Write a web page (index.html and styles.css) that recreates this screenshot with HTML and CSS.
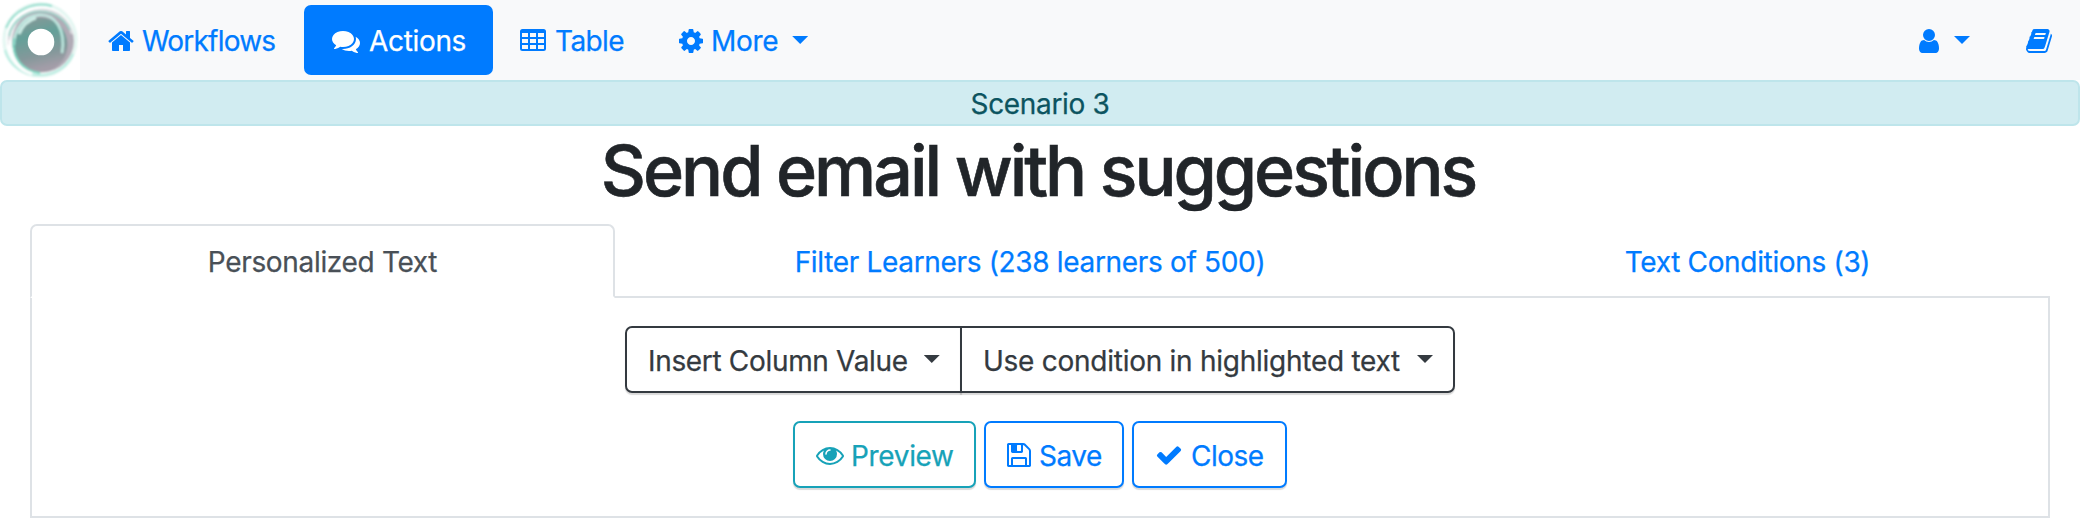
FILE: index.html
```
<!DOCTYPE html>
<html lang="en">
<head>
<meta charset="utf-8">
<title>Send email with suggestions</title>
<link rel="stylesheet" href="styles.css">
</head>
<body>
<nav class="navbar">
  <a class="brand" href="#">
    <svg class="logo" viewBox="0 0 80 80">
      <defs>
        <linearGradient id="ring" x1="0" y1="0" x2="0.25" y2="1">
          <stop offset="0" stop-color="#8d9698"/>
          <stop offset="0.4" stop-color="#64a099"/>
          <stop offset="0.75" stop-color="#83989a"/>
          <stop offset="1" stop-color="#a39da8"/>
        </linearGradient>
        <filter id="soft"><feGaussianBlur stdDeviation="0.9"/></filter>
      </defs>
      <rect width="80" height="80" fill="#fff"/>
      <g fill="none" filter="url(#soft)">
        <circle cx="40" cy="40" r="36" stroke="#e2f6f1" stroke-width="3"/>
        <path d="M6 28C13 10 34 1 52 6" stroke="#8fdcca" stroke-width="2"/>
        <path d="M5 50C9 66 24 76 42 75C57 74 68 66 73 54" stroke="#b4ebdf" stroke-width="2"/>
        <circle cx="43" cy="41" r="31" fill="#b0abb6"/>
        <circle cx="40" cy="45" r="27.5" fill="url(#ring)"/>
        <path d="M9 45C7 26 23 11 42 10C57 10 68 20 72 34" stroke="#d9dade" stroke-width="2.5"/>
        <path d="M9 36C12 19 30 9 46 12C58 14 66 22 70 30" stroke="#8fd4c6" stroke-width="1.5"/>
        <path d="M14 45C14 30 24 16 39 15C55 14 66 29 62 53" stroke="#c3eee5" stroke-width="2.3"/>
        <path d="M19 34C23 24 29 20 36 18" stroke="#d3f3ec" stroke-width="2.6"/>
        <path d="M14 38C11 57 22 71 40 73" stroke="#7ddbc5" stroke-width="2"/>
        <path d="M10 40C8 58 18 70 32 74" stroke="#fff" stroke-width="2.5"/>
      </g>
      <circle cx="41" cy="42" r="13.3" fill="#fff"/>
    </svg>
  </a>
  <a class="nav-link nav-workflows" href="#"><svg class="icon" viewBox="0 0 1792 1792"><path d="M1472 992v480q0 26-19 45t-45 19h-384v-384h-256v384h-384q-26 0-45-19t-19-45v-480q0-1 .5-3t.5-3l575-474 575 474q1 2 1 6zm223-69l-62 74q-8 9-21 11h-3q-13 0-21-7l-692-577-692 577q-12 8-24 7-13-2-21-11l-62-74q-8-10-7-23.5t11-21.5l719-599q32-26 76-26t76 26l244 204v-195q0-14 9-23t23-9h192q14 0 23 9t9 23v408l219 182q10 8 11 21.5t-7 23.5z"/></svg><span>Workflows</span></a>
  <a class="nav-link nav-actions active" href="#"><svg class="icon" viewBox="0 0 1792 1792"><path d="M1408 768q0 139-94 257t-256.500 186.500-353.500 68.500q-86 0-176-16-124 88-278 128-36 9-86 16h-3q-11 0-20.500-8t-11.500-21q-1-3-1-6.500t.5-6.500 2-6l2.500-5 3.500-5.500 4-5 4.500-5 4-4.500q5-6 23-25t26-29.500 22.500-29 25-38.500 20.500-44q-124-72-195-177t-71-224q0-139 94-257t256.500-186.500 353.500-68.500 353.500 68.500 256.500 186.500 94 257zm384 256q0 120-71 224.500t-195 176.500q10 24 20.500 44t25 38.500 22.500 29 26 29.500 23 25q1 1 4 4.500t4.500 5 4 5 3.500 5.500l2.500 5 2 6 .5 6.500-1 6.500q-3 14-13 22t-22 7q-50-7-86-16-154-40-278-128-90 16-176 16-271 0-472-132 58 4 88 4 161 0 309-45t264-129q125-92 192-212t67-254q0-77-23-152 129 71 204 178t75 230z"/></svg><span>Actions</span></a>
  <a class="nav-link nav-table" href="#"><svg class="icon" viewBox="0 0 28 28"><path fill-rule="evenodd" d="M3.500 2h21a2.500 2.500 0 0 1 2.500 2.500v17a2.500 2.500 0 0 1-2.500 2.500h-21a2.500 2.500 0 0 1-2.500-2.500v-17a2.500 2.500 0 0 1 2.500-2.500zM3 6v4h6v-4zM11 6v4h6v-4zM19 6v4h6v-4zM3 12v4h6v-4zM11 12v4h6v-4zM19 12v4h6v-4zM3 18v3.500q0 .5.500.5h5.500v-4zM11 18v4h6v-4zM19 18v4h5.500q.5 0 .5-.5v-3.500z"/></svg><span>Table</span></a>
  <a class="nav-link nav-more" href="#"><svg class="icon" viewBox="0 0 1792 1792"><path d="M1152 896q0-106-75-181t-181-75-181 75-75 181 75 181 181 75 181-75 75-181zm512-109v222q0 12-8 23t-20 13l-185 28q-19 54-39 91 35 50 107 138 10 12 10 25t-9 23q-27 37-99 108t-94 71q-12 0-26-9l-138-108q-44 23-91 38-16 136-29 186-7 28-36 28h-222q-14 0-24.500-8.500t-11.500-21.500l-28-184q-49-16-90-37l-141 107q-10 9-25 9-14 0-25-11-126-114-165-168-7-10-7-23 0-12 8-23 15-21 51-66.500t54-70.500q-27-50-41-99l-183-27q-13-2-21-12.500t-8-23.500v-222q0-12 8-23t19-13l186-28q14-46 39-92-40-57-107-138-10-12-10-24 0-10 9-23 26-36 98.500-107.500t94.500-71.500q13 0 26 10l138 107q44-23 91-38 16-136 29-186 7-28 36-28h222q14 0 24.500 8.500t11.500 21.500l28 184q49 16 90 37l142-107q9-9 24-9 13 0 25 10 129 119 165 170 7 8 7 22 0 12-8 23-15 21-51 66.500t-54 70.500q26 50 41 98l183 28q13 2 21 12.500t8 23.500z"/></svg><span>More</span><i class="caret"></i></a>
  <a class="nav-link nav-user" href="#"><svg class="icon" viewBox="0 0 1792 1792"><path d="M1536 1399q0 109-62.500 187t-150.500 78h-854q-88 0-150.500-78t-62.500-187q0-85 8.500-160.500t31.500-152 58.500-131 94-89 134.500-34.500q131 128 313 128t313-128q76 0 134.500 34.500t94 89 58.500 131 31.500 152 8.500 160.500zm-256-887q0 159-112.500 271.500t-271.500 112.500-271.500-112.500-112.500-271.500 112.500-271.500 271.500-112.500 271.500 112.500 112.500 271.500z"/></svg><i class="caret"></i></a>
  <a class="nav-link nav-book" href="#"><svg class="icon" viewBox="0 0 1792 1792"><path d="M1703 478q40 57 18 129l-275 906q-19 64-76.500 107.500t-122.500 43.500h-923q-77 0-148.500-53.500t-99.500-131.500q-24-67-2-127 0-4 3-27t4-37q1-8-3-21.500t-3-19.500q2-11 8-21t16.500-23.500 16.500-23.500q23-38 45-91.500t30-91.500q3-10 .5-30t-.5-28q3-11 17-28t17-23q21-36 42-92t25-90q1-9-2.500-32t.5-28q4-13 22-30.500t22-22.500q19-26 42.500-84.500t27.500-96.500q1-8-3-25.500t-2-26.500q2-8 9-18t18-23 17-21q8-12 16.500-30.500t15-35 16-36 19.500-32 26.500-23.500 36-11.500 47.500 5.500l-1 3q38-9 51-9h761q74 0 114 56t18 130l-274 906q-36 119-71.500 153.500t-128.500 34.500h-869q-27 0-38 15-11 16-1 43 24 70 144 70h923q29 0 56-15.500t35-41.500l300-987q7-22 5-57 38 15 59 43zm-1064 2q-4 13 2 22.500t20 9.500h608q13 0 25.500-9.500t16.500-22.500l21-64q4-13-2-22.500t-20-9.500h-608q-13 0-25.500 9.500t-16.500 22.500zm-83 256q-4 13 2 22.500t20 9.500h608q13 0 25.500-9.500t16.500-22.500l21-64q4-13-2-22.500t-20-9.500h-608q-13 0-25.500 9.500t-16.500 22.500z"/></svg></a>
</nav>
<div class="alert"><span>Scenario 3</span></div>
<h1 class="title"><span>Send email with suggestions</span></h1>
<main class="editor">
  <div class="tabs">
    <a class="tab tab-text active" href="#"><span>Personalized Text</span></a>
    <a class="tab tab-filter" href="#"><span>Filter Learners (238 learners of 500)</span></a>
    <a class="tab tab-conditions" href="#"><span>Text Conditions (3)</span></a>
  </div>
  <section class="pane">
    <div class="btn-group">
      <button class="btn btn-dark btn-insert"><span>Insert Column Value</span><i class="caret"></i></button>
      <button class="btn btn-dark btn-condition"><span>Use condition in highlighted text</span><i class="caret"></i></button>
    </div>
    <div class="actions">
      <button class="btn btn-info btn-preview"><svg class="icon" viewBox="0 0 1792 1792"><path d="M1664 960q-152-236-381-353 61 104 61 225 0 185-131.500 316.500t-316.500 131.500-316.500-131.500-131.500-316.500q0-121 61-225-229 117-381 353 133 205 333.500 326.500t434.500 121.500 434.500-121.500 333.500-326.500zm-720-384q0-20-14-34t-34-14q-125 0-214.500 89.500t-89.500 214.500q0 20 14 34t34 14 34-14 14-34q0-86 61-147t147-61q20 0 34-14t14-34zm848 384q0 34-20 69-140 230-376.500 368.500t-499.500 138.500-499.500-139-376.500-368q-20-35-20-69t20-69q140-229 376.500-368t499.500-139 499.500 139 376.500 368q20 35 20 69z"/></svg><span>Preview</span></button>
      <button class="btn btn-primary btn-save"><svg class="icon" viewBox="0 0 1792 1792"><path d="M512 1536h768v-384h-768v384zm896 0h128v-896q0-14-10-38.500t-20-34.500l-281-281q-10-10-34-20t-39-10v416q0 40-28 68t-68 28h-576q-40 0-68-28t-28-68v-416h-128v1280h128v-416q0-40 28-68t68-28h832q40 0 68 28t28 68v416zm-384-928v-320q0-13-9.500-22.500t-22.500-9.500h-192q-13 0-22.500 9.500t-9.500 22.500v320q0 13 9.500 22.500t22.500 9.500h192q13 0 22.500-9.500t9.500-22.500zm640 32v928q0 40-28 68t-68 28h-1344q-40 0-68-28t-28-68v-1344q0-40 28-68t68-28h928q40 0 88 20t76 48l280 280q28 28 48 76t20 88z"/></svg><span>Save</span></button>
      <button class="btn btn-primary btn-close"><svg class="icon" viewBox="0 0 1792 1792"><path d="M1671 566q0 40-28 68l-724 724-136 136q-28 28-68 28t-68-28l-136-136-362-362q-28-28-28-68t28-68l136-136q28-28 68-28t68 28l294 295 656-657q28-28 68-28t68 28l136 136q28 28 28 68z"/></svg><span>Close</span></button>
    </div>
  </section>
</main>
</body>
</html>
```
FILE: styles.css
```
* { box-sizing: border-box; }
body {
  margin: 0;
  height: 518px;
  overflow: hidden;
  background: #fff;
  color: #212529;
  font: 400 28px/42px Inter, "Liberation Sans", sans-serif;
  letter-spacing: -0.33px;
  -webkit-text-stroke: 0.25px currentColor;
}
a { color: #007bff; text-decoration: none; }
span { white-space: nowrap; }
.icon { width: 28px; height: 28px; flex: none; fill: currentColor; }
.caret {
  flex: none;
  width: 16px;
  height: 8px;
  background: currentColor;
  clip-path: polygon(0 0, 100% 0, 50% 100%);
}

.navbar { display: flex; align-items: center; height: 80px; background: #f8f9fa; }
.brand, .logo { display: block; width: 80px; height: 80px; }
.nav-link { display: flex; align-items: center; height: 70px; border-radius: 7px; padding-left: 27px; }
.nav-link .icon { margin-top: 2px; }
.nav-link span { padding-top: 2px; }
.nav-workflows { width: 224px; gap: 7px; letter-spacing: -0.8px; }
.nav-actions { width: 189px; padding-left: 28px; gap: 9px; }
.nav-link.active { background: #007bff; color: #fff; }
.nav-table { width: 157px; padding-left: 26px; gap: 8px; letter-spacing: -0.6px; }
.nav-more { width: 186px; gap: 6px; }
.nav-more .caret { margin-left: 8px; }
.nav-user { margin-left: auto; width: 110px; gap: 11px; padding-left: 27px; }
.nav-book { width: 82px; }

.alert {
  height: 46px;
  padding-top: 1px;
  border: 2px solid #bee5eb;
  border-radius: 7px;
  background: #d1ecf1;
  color: #0c5460;
  text-align: center;
}
.title {
  margin: 0;
  height: 98px;
  padding: 3px 4px 0 0;
  font-size: 70px;
  line-height: 84px;
  font-weight: 500;
  letter-spacing: -3.05px;
  text-align: center;
  -webkit-text-stroke-width: 0.6px;
}

.editor { margin: 0 30px; }
.tabs { display: flex; height: 74px; border-bottom: 2px solid #dee2e6; }
.tab { height: 74px; padding-top: 17px; text-align: center; }
.tab-text { width: 585px; border: 2px solid #dee2e6; border-bottom-color: #fff; border-radius: 7px 7px 0 0; padding-top: 15px; }
.tab.active { color: #495057; }
.tab-filter { width: 830px; }
.tab-conditions { width: 605px; }
.pane { height: 220px; padding-top: 28px; border: 2px solid #dee2e6; border-top: 0; }
.btn-group, .actions { display: flex; justify-content: center; }
.btn {
  display: flex;
  align-items: center;
  height: 67px;
  padding: 0 0 0 21px;
  border: 2px solid currentColor;
  border-radius: 7px;
  background: #fff;
  font: inherit;
  letter-spacing: inherit;
  box-shadow: 0 2px 1px rgba(0, 0, 0, 0.15);
}
.btn span { padding-top: 2px; }
.btn .caret { margin-top: -1px; }
.btn-dark { color: #343a40; }
.btn-info { color: #17a2b8; }
.btn-primary { color: #007bff; }
.btn-insert { width: 337px; gap: 16px; border-radius: 7px 0 0 7px; }
.btn-condition { width: 495px; margin-left: -2px; gap: 17px; border-radius: 0 7px 7px 0; letter-spacing: -0.26px; }
.actions { gap: 8px; margin-top: 28px; }
.btn-preview { width: 183px; gap: 7px; }
.btn-save { width: 140px; padding-left: 19px; gap: 6px; letter-spacing: -0.5px; }
.btn-close { width: 155px; gap: 8px; letter-spacing: -0.5px; }
```
